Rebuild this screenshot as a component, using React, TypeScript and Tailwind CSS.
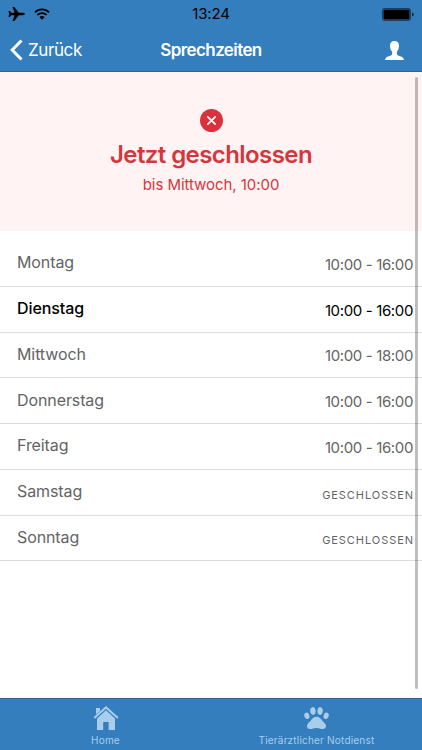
import React from 'react';

interface OpeningTime {
  day: string;
  hours: string | null;
  today?: boolean;
}

const openingTimes: OpeningTime[] = [
  { day: 'Montag', hours: '10:00 - 16:00' },
  { day: 'Dienstag', hours: '10:00 - 16:00', today: true },
  { day: 'Mittwoch', hours: '10:00 - 18:00' },
  { day: 'Donnerstag', hours: '10:00 - 16:00' },
  { day: 'Freitag', hours: '10:00 - 16:00' },
  { day: 'Samstag', hours: null },
  { day: 'Sonntag', hours: null },
];

const StatusBar: React.FC = () => (
  <div className="grid h-7 grid-cols-3 items-center text-black">
    <div className="flex items-center gap-[9px] pl-2">
      <svg className="h-4 w-[17px]" viewBox="0 0 17 16" fill="currentColor">
        <path d="M16.8 8c0 .7-.8 1.200-1.900 1.200h-4.100L6.300 15H4.500l2.100-5.700H3.400L1.800 11H.5l.7-3L.5 5h1.300l1.600 1.700h3.200L4.500 1h1.800l4.500 5.800h4.100c1.100 0 1.900.5 1.900 1.200z" />
      </svg>
      <svg className="h-[12px] w-4" viewBox="0 0 16 12" fill="none" stroke="currentColor" strokeWidth="1.7">
        <path d="M.9 4.3c4-3.9 10.200-3.900 14.200 0" />
        <path d="M3.300 7c2.700-2.600 6.700-2.600 9.400 0" />
        <path d="M8 11.700 5.300 9.100c1.500-1.400 3.900-1.400 5.400 0z" fill="currentColor" stroke="none" />
      </svg>
    </div>
    <time className="text-center text-[15px] tracking-[-0.2px]">13:24</time>
    <div className="flex justify-end pr-2">
      <svg className="h-[13px] w-8" viewBox="0 0 32 13">
        <rect x=".5" y=".5" width="28" height="12" rx="1.800" fill="none" stroke="#163f65" />
        <rect x="1.500" y="1.500" width="26" height="10" rx=".8" fill="#000" />
        <path d="M30 4.500c1.100.4 1.800 1 1.800 2s-.7 1.600-1.800 2z" fill="#0c2740" />
      </svg>
    </div>
  </div>
);

const NavBar: React.FC = () => (
  <div className="grid h-11 grid-cols-3 items-center text-white">
    <button className="flex items-center gap-[5px] pl-[10px]">
      <svg className="h-[22px] w-[13px]" viewBox="0 0 13 22" fill="none" stroke="currentColor" strokeWidth="3">
        <path d="M11.500 1.500 2.200 11l9.300 9.500" />
      </svg>
      <span className="pt-[2px] text-[17px] tracking-[-0.4px]">Zurück</span>
    </button>
    <h1 className="pt-[2px] text-center text-[17px] font-semibold tracking-[-0.6px]">Sprechzeiten</h1>
    <button className="flex justify-end pr-[18px]" aria-label="Profil">
      <svg className="h-[19px] w-[19px]" viewBox="0 0 19 19" fill="currentColor">
        <path d="M9.500 0c3 0 4.500 1.800 4.500 4.800 0 2.600-.9 4.600-2.100 6v2.300c0 1.200 1.300 1.500 3.100 2.100 2.500.8 3.700 1.600 4 3.800H0c.3-2.200 1.500-3 4-3.800 1.800-.6 3.100-.9 3.100-2.100v-2.300C5.900 9.400 5 7.400 5 4.800 5 1.800 6.500 0 9.500 0z" />
      </svg>
    </button>
  </div>
);

const ClosedBanner: React.FC = () => (
  <section className="flex h-[159px] flex-col items-center bg-[#fff4f3] text-[#d5363e]">
    <svg className="mt-[37px] h-[23px] w-[23px]" viewBox="0 0 23 23">
      <circle cx="11.500" cy="11.500" r="11.500" fill="#d8323c" />
      <path d="m7.800 7.800 7.400 7.400m0-7.400-7.400 7.400" stroke="#fff" strokeWidth="1.700" strokeLinecap="round" />
    </svg>
    <h2 className="mt-2 text-2xl leading-[30px] font-semibold tracking-[-0.58px]">Jetzt geschlossen</h2>
    <p className="mt-[5px] text-[15px] leading-5 tracking-[-0.05px]">bis Mittwoch, 10:00</p>
  </section>
);

const TabBar: React.FC = () => (
  <nav className="grid h-[52px] grid-cols-2 border-t border-[#2c6597] bg-[#347ebd] text-[#a9cdeb]">
    <button className="flex flex-col items-center pt-[7px]">
      <svg className="h-6 w-[26px]" viewBox="0 0 26 24" fill="currentColor">
        <path d="M13 0 .500 11.300l1.400 1.500L13 2.800l11.100 10 1.400-1.500z" />
        <path d="M3 2h4v3L3 8.500z" />
        <path d="M13 4.300 4 12.400V24h6.200v-8h5.400v8H22V12.400z" />
      </svg>
      <span className="mt-[4px] text-[10px] leading-3 tracking-[0.2px]">Home</span>
    </button>
    <button className="flex flex-col items-center pt-[8px]">
      <svg className="h-[22px] w-[25px]" viewBox="0 0 25 22" fill="currentColor">
        <ellipse cx="2.900" cy="8.800" rx="2.500" ry="3.300" transform="rotate(-20 2.900 8.800)" />
        <ellipse cx="8.900" cy="4" rx="2.700" ry="3.900" transform="rotate(-7 8.900 4)" />
        <ellipse cx="16.100" cy="4" rx="2.700" ry="3.900" transform="rotate(7 16.100 4)" />
        <ellipse cx="22.100" cy="8.800" rx="2.500" ry="3.300" transform="rotate(20 22.100 8.800)" />
        <path d="M12.500 9.800c3 0 4.300 2 5.800 4 1.500 1.900 3.700 3 3.700 5.300 0 1.900-1.300 2.900-3 2.900-2.500 0-4-1.100-6.500-1.100S8.500 22 6 22c-1.700 0-3-1-3-2.900 0-2.300 2.200-3.400 3.700-5.300 1.500-2 2.800-4 5.800-4z" />
      </svg>
      <span className="mt-[5px] text-[10px] leading-3 tracking-[0.2px]">Tierärztlicher Notdienst</span>
    </button>
  </nav>
);

const App: React.FC = () => {
  return (
    <div className="relative flex h-[750px] w-[422px] flex-col overflow-hidden bg-white font-['Inter','Liberation_Sans',sans-serif]">
      <header className="h-[72px] border-b border-[#2c6597] bg-[#347ebd]">
        <StatusBar />
        <NavBar />
      </header>

      <main className="flex-1">
        <ClosedBanner />
        <ul className="pt-[10px]">
          {openingTimes.map((item) => (
            <li
              key={item.day}
              className={`flex h-[45.75px] items-center justify-between border-b border-[#dcdcde] pr-[9px] pl-[17px] ${
                item.today ? 'font-medium text-black' : 'text-[#646464]'
              }`}
            >
              <span className="pb-[2px] text-base leading-5 tracking-[-0.1px]">{item.day}</span>
              {item.hours ? (
                <span className={`pt-[3px] text-[15px] leading-5 tracking-[-0.36px] ${item.today ? 'font-normal' : ''}`}>
                  {item.hours}
                </span>
              ) : (
                <span className="-mr-px pt-[5px] text-[11px] leading-5 tracking-[0.95px] uppercase">Geschlossen</span>
              )}
            </li>
          ))}
        </ul>
      </main>

      <TabBar />

      {/* scroll indicator */}
      <div className="absolute top-[77px] right-[4px] h-[612px] w-[3px] rounded-full bg-black/25" />
    </div>
  );
};

export default App;
